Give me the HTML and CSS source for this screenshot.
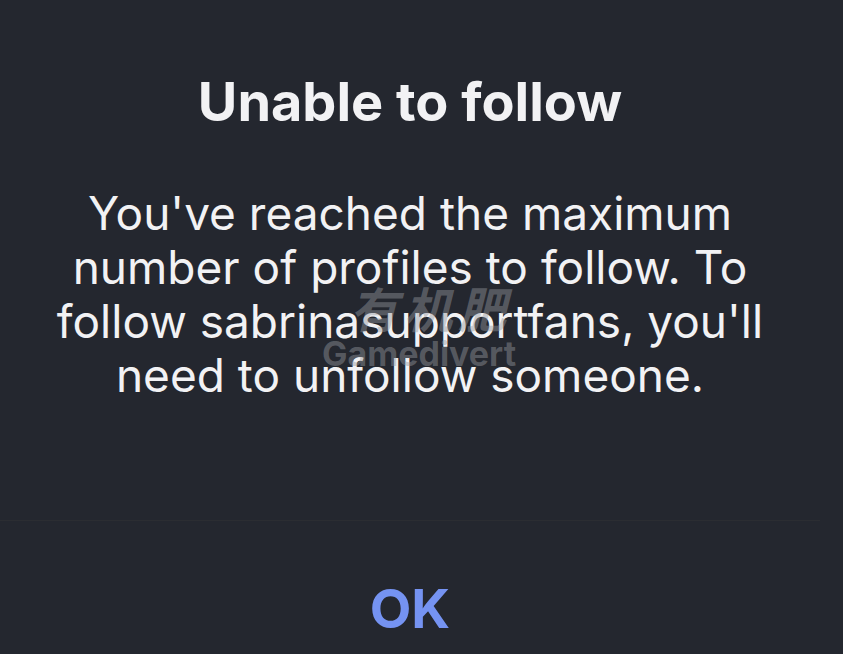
FILE: index.html
```html
<!DOCTYPE html>
<html>
<head>
<meta charset="utf-8">
<link rel="stylesheet" href="styles.css">
</head>
<body>
<div class="dialog">
  <div class="content">
    <h1 class="title">Unable to follow</h1>
    <p class="message">You've reached the maximum number of profiles to follow. To follow sabrinasupportfans, you'll need to unfollow someone.</p>
    <div class="watermark">
      <span class="wm-cn">有机肥</span>
      <span class="wm-en">Gamedivert</span>
    </div>
  </div>
  <div class="actions">
    <button class="ok">OK</button>
  </div>
</div>
</body>
</html>
```

FILE: styles.css
```css
html, body {
  margin: 0;
  padding: 0;
  background: #24272f;
  width: 843px;
  height: 654px;
  overflow: hidden;
}
.dialog {
  width: 820px;
  display: flex;
  flex-direction: column;
  font-family: Inter, "Liberation Sans", sans-serif;
  color: #f2f2f4;
}
.content {
  position: relative;
  height: 521px;
  box-sizing: border-box;
  padding: 68px 30px 0;
  border-bottom: 1px solid #2b2d32;
  text-align: center;
}
.title {
  margin: 0;
  font-size: 54px;
  font-weight: 700;
  line-height: 68px;
  letter-spacing: 0;
}
.message {
  margin: 50px 0 0;
  font-size: 46px;
  font-weight: 400;
  line-height: 54px;
}
.watermark {
  position: absolute;
  left: 318px;
  top: 280px;
  width: 202px;
  display: flex;
  flex-direction: column;
  align-items: center;
  color: rgba(150, 152, 158, 0.45);
  pointer-events: none;
}
.wm-cn {
  font-family: "Noto Sans CJK SC", sans-serif;
  font-size: 48px;
  font-style: italic;
  font-weight: 700;
  line-height: 54px;
  letter-spacing: 6px;
  padding-left: 24px;
}
.wm-en {
  font-size: 34px;
  font-weight: 700;
  line-height: 32px;
  margin-top: 4px;
}
.actions {
  height: 132px;
  display: flex;
  justify-content: center;
  align-items: center;
}
.ok {
  background: none;
  border: none;
  padding: 0;
  font-family: Inter, "Liberation Sans", sans-serif;
  font-size: 54px;
  font-weight: 700;
  color: #7593f2;
  margin-top: 42px;
}
```
